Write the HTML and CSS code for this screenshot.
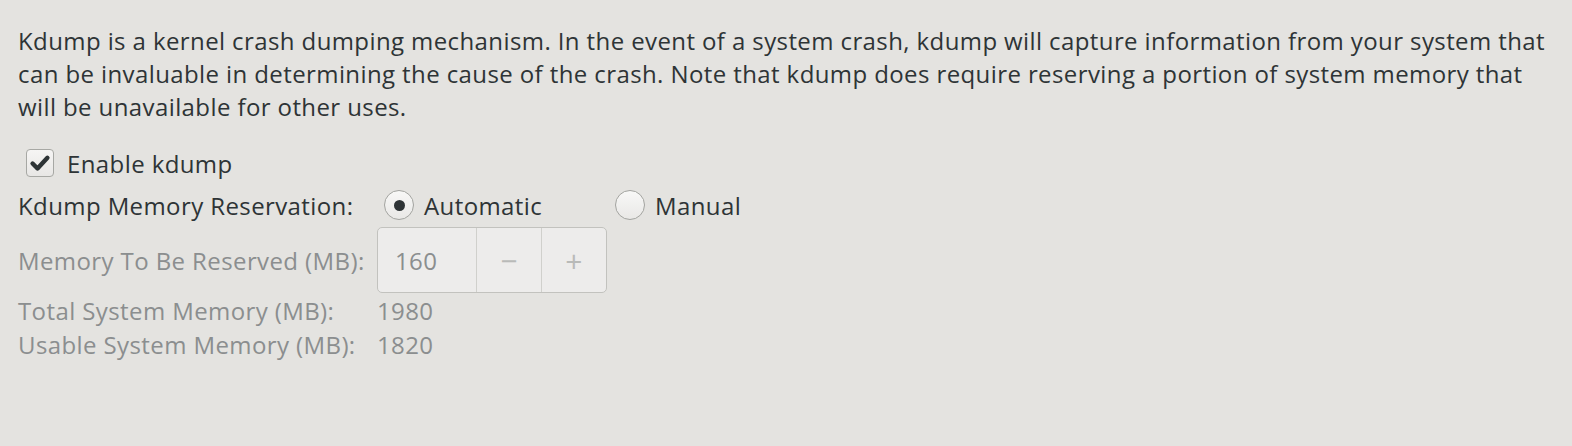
FILE: index.html
```html
<!DOCTYPE html>
<html lang="en">
<head>
<meta charset="utf-8">
<title>Kdump</title>
<link rel="stylesheet" href="styles.css">
</head>
<body>
<main class="page">
  <p class="intro">Kdump is a kernel crash dumping mechanism. In the event of a system crash, kdump will capture information from your system that can be invaluable in determining the cause of the crash. Note that kdump does require reserving a portion of system memory that will be unavailable for other uses.</p>

  <label class="check-row">
    <span class="checkbox">
      <svg viewBox="0 0 16 16" width="22" height="22"><path d="M2.6 8.4 L6.2 12 L13.4 4.2" fill="none" stroke="#2e3436" stroke-width="3.2" stroke-linecap="round" stroke-linejoin="round"/></svg>
    </span>
    <span>Enable kdump</span>
  </label>

  <div class="form">
    <div class="label top">Kdump Memory Reservation:</div>
    <div class="radios top">
      <label class="radio-item first"><span class="radio checked"><span class="dot"></span></span><span>Automatic</span></label>
      <label class="radio-item"><span class="radio"></span><span>Manual</span></label>
    </div>

    <div class="label disabled">Memory To Be Reserved (MB):</div>
    <div class="spin">
      <span class="spin-value">160</span>
      <span class="spin-btn">−</span>
      <span class="spin-btn">+</span>
    </div>

    <div class="label disabled">Total System Memory (MB):</div>
    <div class="value disabled">1980</div>

    <div class="label disabled">Usable System Memory (MB):</div>
    <div class="value disabled">1820</div>
  </div>
</main>
</body>
</html>
```
FILE: styles.css
```css
html, body {
  margin: 0;
  padding: 0;
  background: #e4e3e0;
}

body {
  width: 1572px;
  height: 446px;
  overflow: hidden;
  font-family: "Open Sans", "Noto Sans", sans-serif;
  font-size: 24px;
  letter-spacing: 0.4px;
  color: #2e3436;
}

.page {
  padding: 24px 18px 0 18px;
}

.intro {
  margin: 0;
  line-height: 33px;
  max-width: 1536px;
}

.check-row {
  display: flex;
  align-items: center;
  height: 34px;
  margin-top: 23px;
  padding-left: 8px;
  gap: 13px;
}

.checkbox {
  width: 28px;
  height: 28px;
  box-sizing: border-box;
  border: 1px solid #a7a8a4;
  border-radius: 4px;
  background: linear-gradient(#f6f5f4, #e8e7e5);
  display: flex;
  align-items: center;
  justify-content: center;
}

.form {
  display: grid;
  grid-template-columns: 359px auto;
  grid-template-rows: 39px 66px 34px 34px;
  margin-top: 8px;
  align-items: center;
}

.form > .top {
  align-self: start;
  height: 34px;
  display: flex;
  align-items: center;
}

.label {
  white-space: nowrap;
}

.disabled {
  color: #8b8e8f;
}

.radios {
  display: flex;
  align-items: center;
  padding-left: 7px;
}

.radio-item {
  display: flex;
  align-items: center;
  gap: 10px;
}

.radio-item.first {
  width: 231px;
}

.radio {
  width: 30px;
  height: 30px;
  box-sizing: border-box;
  border: 1px solid #a3a4a0;
  border-radius: 50%;
  background: linear-gradient(#f8f8f7, #e9e8e6);
  display: flex;
  align-items: center;
  justify-content: center;
}

.dot {
  width: 11px;
  height: 11px;
  border-radius: 50%;
  background: #2e3436;
}

.spin {
  display: flex;
  width: 230px;
  height: 66px;
  box-sizing: border-box;
  border: 1px solid #c2c2be;
  border-radius: 5px;
  background: #edeceb;
  color: #8b8e8f;
  justify-self: start;
}

.spin-value {
  width: 98px;
  box-sizing: border-box;
  padding-left: 17px;
  display: flex;
  align-items: center;
}

.spin-btn {
  flex: 1;
  display: flex;
  align-items: center;
  justify-content: center;
  border-left: 1px solid #d0d0cc;
  color: #b9bab8;
  font-size: 30px;
}

.value {
  white-space: nowrap;
}
```
